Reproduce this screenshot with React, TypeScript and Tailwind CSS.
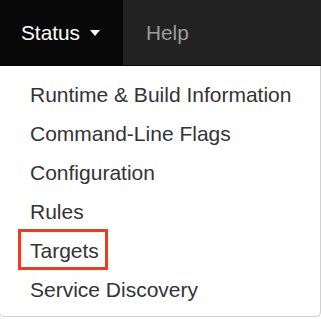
export default function App() {
  const items = [
    "Runtime & Build Information",
    "Command-Line Flags",
    "Configuration",
    "Rules",
    "Targets",
    "Service Discovery",
  ];
  return (
    <div
      className="w-[321px] h-[319px] bg-white overflow-hidden"
      style={{ fontFamily: '"Liberation Sans", Arial, sans-serif' }}
    >
      <nav className="flex h-[66px] bg-[#222222] border-b border-[#080808]">
        <div className="flex items-center w-[123px] bg-[#080808] pl-[21px] text-white text-[20.8px]">
          <span>Status</span>
          <span className="ml-[10px] mt-[1px] w-0 h-0 border-l-[5px] border-r-[5px] border-t-[6px] border-l-transparent border-r-transparent border-t-white" />
        </div>
        <div className="flex items-center pl-[23px] text-[#9d9d9d] text-[20.8px]">Help</div>
      </nav>
      <div className="w-[322px] -ml-px bg-white border border-t-0 border-[#cfcfcf] rounded-b-[5px] pt-[9px] pb-[7px]">
        {items.map((t) => (
          <div
            key={t}
            className="relative h-[39px] leading-[39px] pl-[30px] text-[21px] text-[#333333] whitespace-nowrap"
          >
            {t}
            {t === "Targets" && (
              <span className="absolute left-[18px] top-[-2px] w-[90px] h-[41px] border-[3px] border-[#f5391a]" />
            )}
          </div>
        ))}
      </div>
    </div>
  );
}
